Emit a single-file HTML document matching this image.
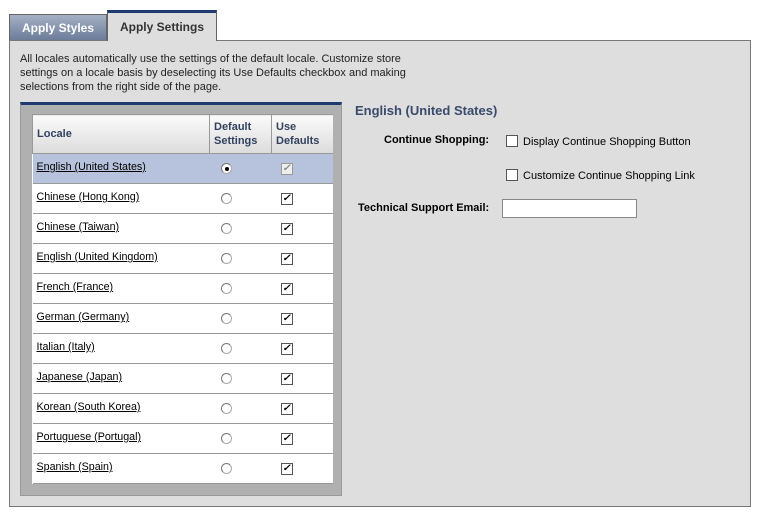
<!DOCTYPE html>
<html><head><style>
*{margin:0;padding:0;box-sizing:border-box}
body{width:765px;height:521px;background:#fff;font-family:"Liberation Sans",sans-serif;font-size:11px;color:#000;position:relative;overflow:hidden}
.abs{position:absolute}
.tab1{left:9px;top:14px;width:98px;height:27px;background:linear-gradient(#a4b0c4,#6a7a98);color:#fff;font-weight:bold;font-size:12px;text-align:center;line-height:27px;border:1px solid #666;border-bottom:none}
.tab2{left:107px;top:10px;width:110px;height:31px;background:#dedede;border:1px solid #666;border-top:3px solid #1f3a6f;border-bottom:none;font-weight:bold;font-size:12px;color:#333;text-align:center;line-height:29px;z-index:2}
.panel{left:9px;top:40px;width:742px;height:467px;background:#dedede;border:1px solid #777}
.desc{left:20px;top:52px;width:400px;line-height:14px;font-size:11px;color:#222}
.outer{left:20px;top:102px;width:322px;height:394px;background:#b0b0b0;border-top:3px solid #1f3a6f;border-left:1px solid #999;border-right:1px solid #999;border-bottom:1px solid #999}
table{position:absolute;left:32px;top:114px;width:301px;border-collapse:collapse;background:#fff;table-layout:fixed}
td,th{border:1px solid #999;border-left:none;border-right:none;height:30px;font-size:10.7px}
th{height:39px;text-align:left;font-weight:bold;color:#33415f;background:linear-gradient(#fafafa,#dcdcdc);padding-left:4px;line-height:14px;border-left:1px solid #999;font-size:11px}
td.l{padding-left:4px;padding-bottom:3px}
td.l span{text-decoration:underline;color:#000}
td.r{padding-left:11px}
td.k{padding-left:9px}
tr.sel td{background:#b7c3dc}
.rad{display:inline-block;width:11px;height:11px;border-radius:50%;border:1px solid #aaa;border-top-color:#777;border-left-color:#777;background:#fff;position:relative;vertical-align:middle}
.rad.on::after{content:"";position:absolute;left:3px;top:3px;width:4px;height:4px;border-radius:50%;background:#000}
.cb{display:inline-block;width:12px;height:12px;border:1px solid #555;background:#fff;font-size:10px;line-height:10px;text-align:center;vertical-align:middle;font-weight:bold}
.cb.dis{border-color:#999;color:#888;background:#eee}
.h{left:355px;top:103px;font-size:13px;font-weight:bold;color:#3a4a6b}
.lab{font-weight:bold;font-size:11px;color:#000}
</style></head><body>
<div class="abs tab1">Apply Styles</div>
<div class="abs tab2">Apply Settings</div>
<div class="abs panel"></div>
<div class="abs desc">All locales automatically use the settings of the default locale. Customize store settings on a locale basis by deselecting its Use Defaults checkbox and making selections from the right side of the page.</div>
<div class="abs outer"></div>
<table>
<colgroup><col style="width:177px"><col style="width:62px"><col></colgroup>
<tr><th>Locale</th><th>Default<br>Settings</th><th>Use<br>Defaults</th></tr>
<tr class="sel"><td class="l"><span>English (United States)</span></td><td class="r"><i class="rad on"></i></td><td class="k"><i class="cb dis">✓</i></td></tr>
<tr><td class="l"><span>Chinese (Hong Kong)</span></td><td class="r"><i class="rad"></i></td><td class="k"><i class="cb">✓</i></td></tr>
<tr><td class="l"><span>Chinese (Taiwan)</span></td><td class="r"><i class="rad"></i></td><td class="k"><i class="cb">✓</i></td></tr>
<tr><td class="l"><span>English (United Kingdom)</span></td><td class="r"><i class="rad"></i></td><td class="k"><i class="cb">✓</i></td></tr>
<tr><td class="l"><span>French (France)</span></td><td class="r"><i class="rad"></i></td><td class="k"><i class="cb">✓</i></td></tr>
<tr><td class="l"><span>German (Germany)</span></td><td class="r"><i class="rad"></i></td><td class="k"><i class="cb">✓</i></td></tr>
<tr><td class="l"><span>Italian (Italy)</span></td><td class="r"><i class="rad"></i></td><td class="k"><i class="cb">✓</i></td></tr>
<tr><td class="l"><span>Japanese (Japan)</span></td><td class="r"><i class="rad"></i></td><td class="k"><i class="cb">✓</i></td></tr>
<tr><td class="l"><span>Korean (South Korea)</span></td><td class="r"><i class="rad"></i></td><td class="k"><i class="cb">✓</i></td></tr>
<tr><td class="l"><span>Portuguese (Portugal)</span></td><td class="r"><i class="rad"></i></td><td class="k"><i class="cb">✓</i></td></tr>
<tr><td class="l"><span>Spanish (Spain)</span></td><td class="r"><i class="rad"></i></td><td class="k"><i class="cb">✓</i></td></tr>
</table>
<div class="abs h">English (United States)</div>
<div class="abs lab" style="left:384px;top:134px">Continue Shopping:</div>
<i class="abs cb" style="left:506px;top:135px"></i>
<div class="abs" style="left:523px;top:136px">Display Continue Shopping Button</div>
<i class="abs cb" style="left:506px;top:169px"></i>
<div class="abs" style="left:523px;top:170px">Customize Continue Shopping Link</div>
<div class="abs lab" style="left:358px;top:202px">Technical Support Email:</div>
<div class="abs" style="left:502px;top:199px;width:135px;height:19px;background:#fff;border:1px solid #888"></div>
</body></html>
